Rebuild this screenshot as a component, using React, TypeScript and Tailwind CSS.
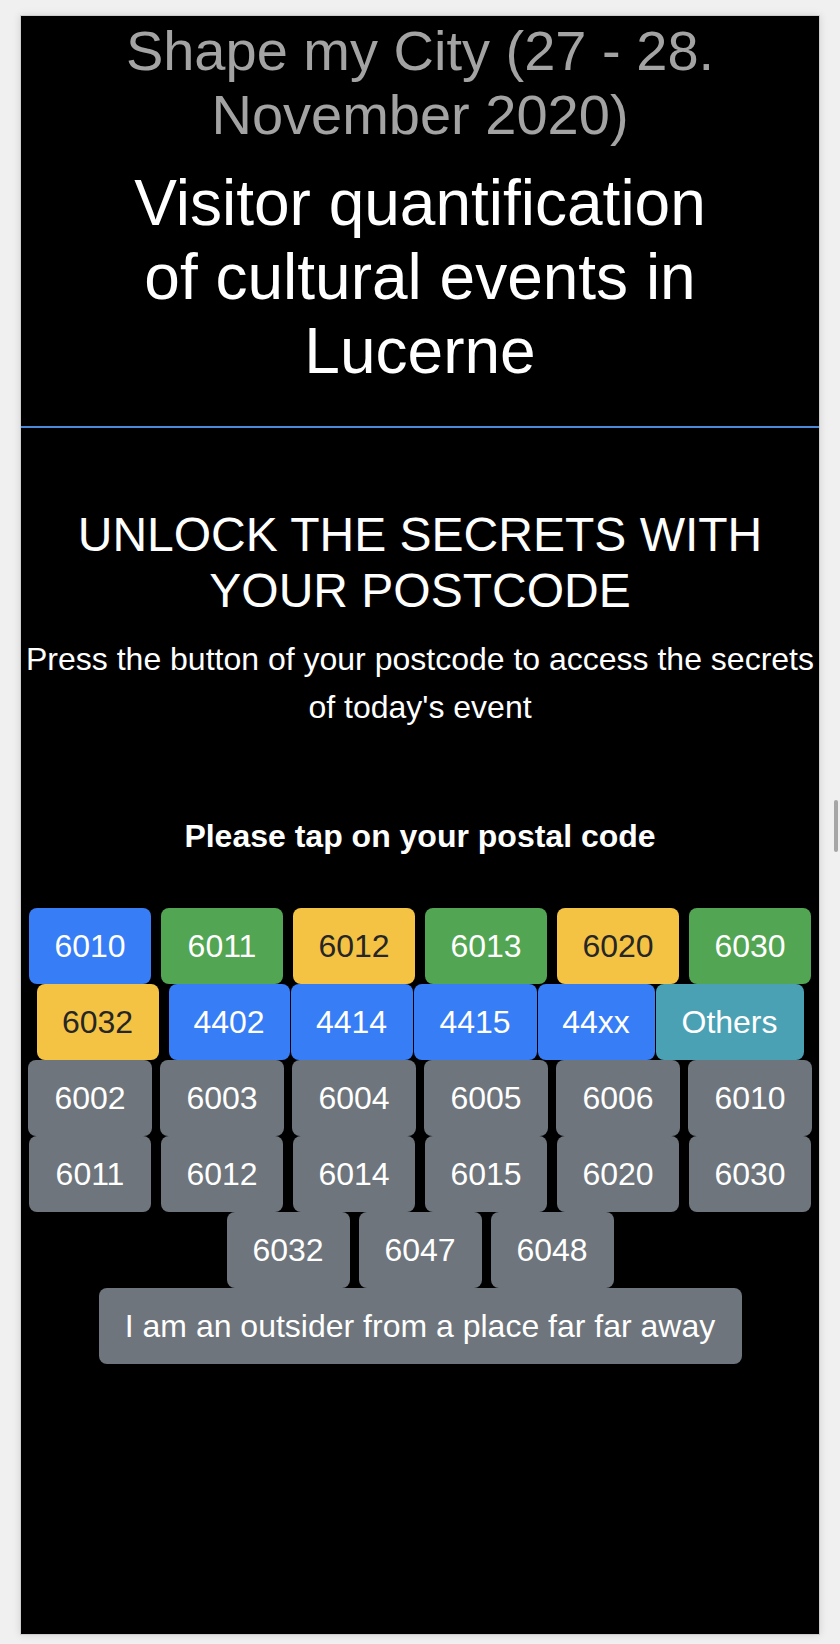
import React from "react";

type Tone = "blue" | "green" | "yellow" | "teal" | "gray";

const toneClass: Record<Tone, string> = {
  blue: "bg-[#377df6] text-white",
  green: "bg-[#52a552] text-white",
  yellow: "bg-[#f5c343] text-[#262626]",
  teal: "bg-[#4aa1b4] text-white",
  gray: "bg-[#6e757c] text-white",
};

function Btn({ label, tone, cls }: { label: string; tone: Tone; cls: string }) {
  return (
    <div
      className={`h-[76px] rounded-[8px] flex items-center justify-center shrink-0 text-[32px] leading-[48px] whitespace-nowrap ${toneClass[tone]} ${cls}`}
    >
      {label}
    </div>
  );
}

export default function App() {
  const row1: [string, Tone][] = [
    ["6010", "blue"],
    ["6011", "green"],
    ["6012", "yellow"],
    ["6013", "green"],
    ["6020", "yellow"],
    ["6030", "green"],
  ];
  const row3 = ["6002", "6003", "6004", "6005", "6006", "6010"];
  const row4 = ["6011", "6012", "6014", "6015", "6020", "6030"];
  const row5 = ["6032", "6047", "6048"];

  return (
    <div className="min-h-[1644px] w-[840px] bg-[#f0f0f0] flex font-['Liberation_Sans',Arial,Helvetica,sans-serif]">
      <div className="w-[20px] shrink-0" />
      <div className="w-[800px] h-[1620px] mt-[15px] shrink-0 bg-black border border-[#cdcdcd] shadow-[0_0_8px_rgba(0,0,0,0.12)] flex flex-col items-center text-center">
        <h3 className="mt-[3px] text-[56px] leading-[64px] text-[#a3a3a3] font-normal">
          Shape my City (27 - 28.
          <br />
          November 2020)
        </h3>
        <h2 className="mt-[19px] text-[64px] leading-[74px] text-white font-normal">
          Visitor quantification
          <br />
          of cultural events in
          <br />
          Lucerne
        </h2>
        <div className="mt-[38px] h-[2px] w-full bg-[#4a8ad6]" />
        <h4 className="mt-[79px] text-[48px] leading-[56px] text-white font-normal">
          UNLOCK THE SECRETS WITH
          <br />
          YOUR POSTCODE
        </h4>
        <p className="mt-[16px] text-[32px] leading-[48px] text-white">
          Press the button of your postcode to access the secrets
          <br />
          of today's event
        </p>
        <p className="mt-[81px] text-[32px] leading-[48px] text-white font-bold">
          Please tap on your postal code
        </p>

        <div className="mt-[48px] flex flex-col items-center w-full">
          <div className="flex justify-center">
            {row1.map(([l, t], i) => (
              <Btn key={i} label={l} tone={t} cls="w-[122px] mx-[5px]" />
            ))}
          </div>
          <div className="flex justify-center">
            <Btn label="6032" tone="yellow" cls="w-[122px] mx-[5px]" />
            <div className="flex gap-px mx-[5px]">
              <Btn label="4402" tone="blue" cls="w-[121px]" />
              <Btn label="4414" tone="blue" cls="w-[122px]" />
              <Btn label="4415" tone="blue" cls="w-[123px]" />
              <Btn label="44xx" tone="blue" cls="w-[117px]" />
              <Btn label="Others" tone="teal" cls="w-[148px]" />
            </div>
          </div>
          <div className="flex justify-center">
            {row3.map((l, i) => (
              <Btn key={i} label={l} tone="gray" cls="w-[124px] mx-[4px]" />
            ))}
          </div>
          <div className="flex justify-center">
            {row4.map((l, i) => (
              <Btn key={i} label={l} tone="gray" cls="w-[122px] mx-[5px]" />
            ))}
          </div>
          <div className="flex justify-center">
            {row5.map((l, i) => (
              <Btn key={i} label={l} tone="gray" cls="w-[123px] mx-[4.5px]" />
            ))}
          </div>
          <div className="flex justify-center">
            <Btn
              label="I am an outsider from a place far far away"
              tone="gray"
              cls="w-[643px]"
            />
          </div>
        </div>
      </div>
      <div className="w-[20px] shrink-0 flex flex-col">
        <div className="mt-[800px] ml-[14px] w-[4px] h-[52px] rounded-full bg-[#a6a6a6]" />
      </div>
    </div>
  );
}
